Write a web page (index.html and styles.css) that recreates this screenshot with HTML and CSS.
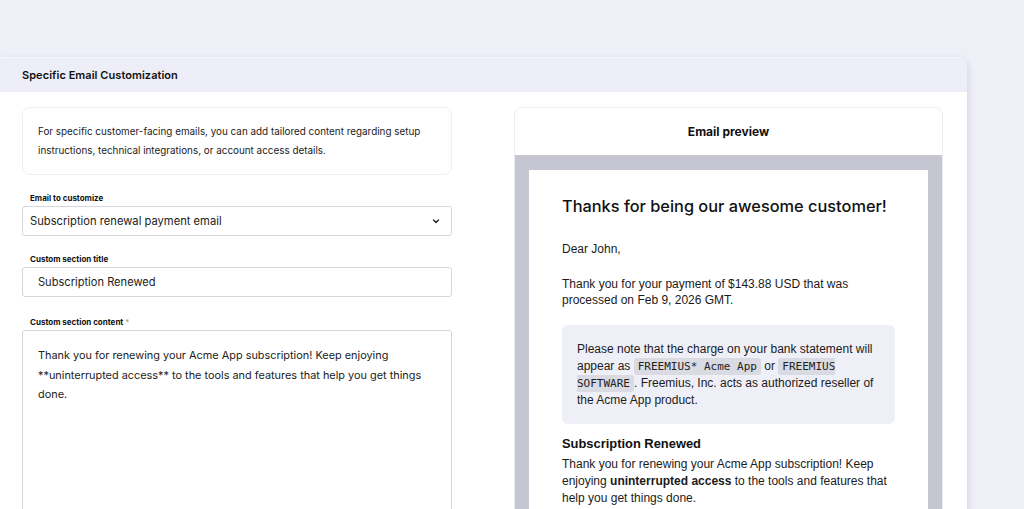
FILE: index.html
```html
<!DOCTYPE html>
<html lang="en">
<head>
<meta charset="utf-8">
<title>Specific Email Customization</title>
<link rel="stylesheet" href="styles.css">
</head>
<body>
<div class="page">
  <section class="card">
    <header class="card-header">Specific Email Customization</header>
    <div class="card-body">
      <div class="form-col">
        <div class="info-box">
          For specific customer-facing emails, you can add tailored content regarding setup instructions, technical integrations, or account access details.
        </div>
        <div class="field">
          <label class="label">Email to customize</label>
          <div class="select">
            <span>Subscription renewal payment email</span>
            <svg class="chevron" width="10" height="10" viewBox="0 0 10 10"><path d="M2.5 4 L5 6.5 L7.5 4" fill="none" stroke="#222" stroke-width="1.4" stroke-linecap="round" stroke-linejoin="round"/></svg>
          </div>
        </div>
        <div class="field">
          <label class="label">Custom section title</label>
          <div class="input">Subscription Renewed</div>
        </div>
        <div class="field field-content">
          <label class="label">Custom section content <span class="req">*</span></label>
          <div class="textarea">Thank you for renewing your Acme App subscription! Keep enjoying **uninterrupted access** to the tools and features that help you get things done.</div>
        </div>
      </div>
      <div class="preview-col">
        <div class="preview-card">
          <div class="preview-header">Email preview</div>
          <div class="preview-frame">
            <div class="email">
              <h1 class="email-title">Thanks for being our awesome customer!</h1>
              <p class="email-p">Dear John,</p>
              <p class="email-p">Thank you for your payment of $143.88 USD that was processed on Feb 9, 2026 GMT.</p>
              <div class="note">Please note that the charge on your bank statement will appear as <code class="chip">FREEMIUS* Acme App</code> or <code class="chip">FREEMIUS SOFTWARE</code>. Freemius, Inc. acts as authorized reseller of the Acme App product.</div>
              <h2 class="email-sub">Subscription Renewed</h2>
              <p class="email-p tight">Thank you for renewing your Acme App subscription! Keep enjoying <strong>uninterrupted access</strong> to the tools and features that help you get things done.</p>
            </div>
          </div>
        </div>
      </div>
    </div>
  </section>
</div>
</body>
</html>
```

FILE: styles.css
```css
* { box-sizing: border-box; }
html, body { margin: 0; padding: 0; }
body {
  background: #efeff8;
  font-family: Inter, "Noto Sans", sans-serif;
  color: #1b1b1f;
  overflow: hidden;
  height: 509px;
}
.page {
  padding-top: 57px;
  width: 967px;
}
.card {
  background: #fff;
  border-radius: 0 10px 0 0;
  box-shadow: 2px 2px 6px rgba(60, 60, 110, 0.12);
  height: 460px;
  overflow: hidden;
}
.card-header {
  background: #eeeef8;
  border-top: 1px solid #f8f8fc;
  height: 35px;
  padding-left: 22px;
  display: flex;
  align-items: center;
  font-size: 11px;
  font-weight: 600;
  color: #111;
  letter-spacing: 0.05px;
}
.card-body {
  display: grid;
  grid-template-columns: 430px 429px;
  column-gap: 62px;
  padding: 15px 24px 0 22px;
}
.info-box {
  border: 1px solid #efeff4;
  border-radius: 8px;
  padding: 14px 15px 14px 15px;
  height: 68px;
  font-size: 9.9px;
  line-height: 19px;
  color: #222;
}
.field { margin-top: 18px; }
.field-content { margin-top: 20px; }
.label {
  display: block;
  font-size: 8px;
  font-weight: 700;
  color: #111;
  line-height: 10px;
  margin: 0 0 3px 8px;
}
.req { color: #999; font-weight: 400; }
.select, .input {
  height: 30px;
  border: 1px solid #d6d6de;
  border-radius: 3px;
  display: flex;
  align-items: center;
  color: #222;
}
.select {
  padding: 0 8px 0 7px;
  justify-content: space-between;
  font-size: 11.2px;
}
.chevron { margin-right: 2px; }
.input { padding: 0 15px; font-size: 11.1px; }
.textarea {
  border: 1px solid #d6d6de;
  border-radius: 3px;
  height: 220px;
  padding: 15px 15px;
  font-size: 10.9px;
  line-height: 19.5px;
  color: #222;
}
.preview-card {
  border: 1px solid #ececf3;
  border-radius: 8px;
  overflow: hidden;
  height: 420px;
}
.preview-header {
  height: 47px;
  display: flex;
  align-items: center;
  justify-content: center;
  font-size: 12px;
  font-weight: 700;
  color: #111;
}
.preview-frame {
  background: #c6c6d2;
  padding: 15px 14px 0 14px;
  height: 100%;
}
.email {
  background: #fff;
  padding: 25px 33px 0 33px;
  height: 100%;
  font-family: "Liberation Sans", Arial, sans-serif;
  font-size: 12px;
  line-height: 16.7px;
  color: #1b1b1b;
}
.email-title {
  margin: 0;
  font-family: Inter, "Noto Sans", sans-serif;
  font-weight: 500;
  font-size: 16.35px;
  line-height: 22px;
  color: #111;
}
.email-p { margin: 24px 0 0 0; }
.email-p + .email-p { margin-top: 18px; }
.note {
  background: #efeff8;
  border-radius: 6px;
  margin-top: 16px;
  padding: 16px 15px 16px 15px;
  line-height: 16.8px;
}
.chip {
  font-family: "DejaVu Sans Mono", "Liberation Mono", monospace;
  font-size: 11px;
  line-height: 10px;
  background: #dadae2;
  border-radius: 3px;
  padding: 2px 4px;
  color: #222;
}
.email-sub {
  margin: 11px 0 0 0;
  font-size: 12.9px;
  line-height: 17px;
  font-weight: 700;
  color: #111;
}
.email-p.tight { margin-top: 4px; line-height: 17px; }
.email strong { font-weight: 700; }
```
